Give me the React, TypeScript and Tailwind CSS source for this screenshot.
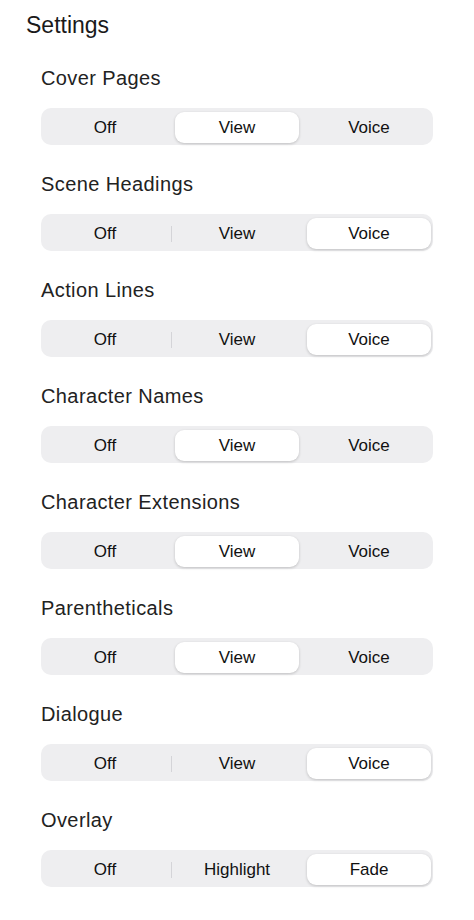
import React from 'react'

type Row = { label: string; options: string[]; selected: number }

const rows: Row[] = [
  { label: 'Cover Pages', options: ['Off', 'View', 'Voice'], selected: 1 },
  { label: 'Scene Headings', options: ['Off', 'View', 'Voice'], selected: 2 },
  { label: 'Action Lines', options: ['Off', 'View', 'Voice'], selected: 2 },
  { label: 'Character Names', options: ['Off', 'View', 'Voice'], selected: 1 },
  { label: 'Character Extensions', options: ['Off', 'View', 'Voice'], selected: 1 },
  { label: 'Parentheticals', options: ['Off', 'View', 'Voice'], selected: 1 },
  { label: 'Dialogue', options: ['Off', 'View', 'Voice'], selected: 2 },
  { label: 'Overlay', options: ['Off', 'Highlight', 'Fade'], selected: 2 },
]

function Segmented({ options, selected }: { options: string[]; selected: number }) {
  return (
    <div className="grid h-[37px] grid-cols-3 gap-[8px] rounded-[10px] bg-[#eeeef0] px-[2px] pb-[2px] pt-[4px]">
      {options.map((opt, i) => {
        const active = i === selected
        // divider sits between two unselected segments
        const showDivider = i > 0 && i - 1 !== selected && i !== selected
        return (
          <div
            key={opt}
            className={
              active
                ? 'relative flex items-center justify-center rounded-[9px] bg-white shadow-[0_1px_3px_rgba(0,0,0,0.2)]'
                : 'relative flex items-center justify-center'
            }
          >
            {showDivider && (
              <span className="absolute left-[-4.5px] top-1/2 h-[16px] w-px -translate-y-1/2 bg-[#d4d4d8]" />
            )}
            <span className="text-[17px] text-[#111]">{opt}</span>
          </div>
        )
      })}
    </div>
  )
}

export default function App() {
  return (
    <div
      className="min-h-screen bg-white pb-8"
      style={{ fontFamily: '"Liberation Sans", Arial, sans-serif' }}
    >
      <h1 className="pl-[26px] pt-[11px] text-[23px] font-normal leading-[28px] text-[#1a1a1a]">
        Settings
      </h1>
      <div className="mt-[27px] flex flex-col gap-[27px] px-[41px]">
        {rows.map((row) => (
          <div key={row.label} className="flex flex-col gap-[18px]">
            <div className="text-[20px] leading-[24px] tracking-[0.4px] text-[#222]">{row.label}</div>
            <Segmented options={row.options} selected={row.selected} />
          </div>
        ))}
      </div>
    </div>
  )
}
